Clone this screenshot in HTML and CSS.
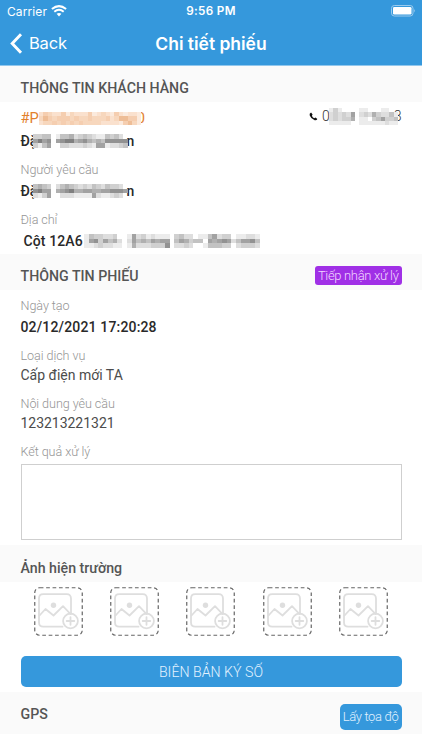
FILE: index.html
```html
<!DOCTYPE html>
<html lang="vi">
<head>
<meta charset="utf-8">
<title>Chi tiết phiếu</title>
<link rel="stylesheet" href="styles.css">
</head>
<body>
<svg class="defs" aria-hidden="true">
  <symbol id="add-photo" viewBox="0 0 49 49">
    <rect x=".75" y=".75" width="47.5" height="47.5" rx="5" fill="none" stroke="#666" stroke-width="1.2" stroke-dasharray="3.7 2.7"/>
    <g fill="none" stroke="#dedede" stroke-width="1.8" stroke-linejoin="round" stroke-linecap="round">
      <path d="M37 26.5V11.5Q37 7.2 32.7 7.2H9.2Q5 7.2 5 11.500V35.500Q5 39.700 9.200 39.700H28.500"/>
      <path d="M5.500 28.500L11.500 22L19.500 28.500L29 19.200L36.500 27"/>
      <circle cx="36.500" cy="34" r="7.400"/>
      <path d="M36.500 30.200V37.800M32.700 34H40.300"/>
    </g>
    <circle cx="19.500" cy="18.200" r="2.700" fill="#dedede"/>
  </symbol>
</svg>

<header class="topbar">
  <div class="status">
    <div class="status-left">
      <span class="carrier">Carrier</span>
      <svg class="wifi" viewBox="0 0 16 12"><path d="M8 11.500L5.600 8.800Q8 7 10.400 8.800Z" fill="#fff"/><path d="M3.300 6.700Q8 2.900 12.700 6.700M.9 4.100Q8-1.800 15.100 4.100" fill="none" stroke="#fff" stroke-width="2"/></svg>
    </div>
    <span class="clock">9:56 PM</span>
    <svg class="battery" viewBox="0 0 25 12"><rect x=".5" y=".5" width="21.500" height="10.500" rx="2.800" fill="none" stroke="#9bcbee"/><rect x="2" y="2" width="18.500" height="7.500" rx="1.300" fill="#fff"/><path d="M23.200 4Q25 5.700 23.200 7.500Z" fill="#9bcbee"/></svg>
  </div>
  <nav class="nav">
    <div class="back"><svg viewBox="0 0 13 21"><path d="M11 1.200L2.200 10.500L11 19.800" fill="none" stroke="#fff" stroke-width="2.900"/></svg><span>Back</span></div>
    <h1>Chi tiết phiếu</h1>
  </nav>
</header>

<main>
  <h2 class="section">THÔNG TIN KHÁCH HÀNG</h2>
  <div class="info">
    <div class="value code-row">
      <div class="code"><span>#P</span><svg class="mosaic m-code" data-tone="orange" data-rows="24322413222412321421221,35434443433433342355441,23343434343333222214531"></svg><span class="tail">0</span></div>
      <div class="phone"><svg class="phone-icon" viewBox="0 0 10 10"><path d="M2.300.6Q0 1.500.8 4Q2.300 8 6.300 9.200Q8.500 9.700 9.300 7.700L7.200 6.100L5.700 7Q3.900 6 3.200 4.200L4 2.900Z" fill="#111"/></svg><span>0</span><svg class="mosaic m-phone" data-rows="1310000110001100,2323260232532241,2323350110346334,1111100111111211"></svg><span class="tail">8</span></div>
    </div>
    <div class="value strong name"><span>Đặ</span><svg class="mosaic m-name" data-rows="334401445234321143420,686706788567545477777,314600332223216612234"></svg><span class="tail">n</span></div>
    <div class="label">Người yêu cầu</div>
    <div class="value strong name"><span>Đặ</span><svg class="mosaic m-name" data-rows="454302454323243243320,786605678556655667776,213600222111162112320"></svg><span class="tail">n</span></div>
    <div class="label">Địa chỉ</div>
    <div class="value strong address"><span>Cột 12A6</span><svg class="mosaic m-address" data-rows="1433223001623121110342201146233011221,1673645202645465660465344065676246674,1123221101522233370223200144433023332"></svg></div>
  </div>

  <div class="section with-action"><h2>THÔNG TIN PHIẾU</h2><span class="badge">Tiếp nhận xử lý</span></div>
  <div class="info ticket">
    <div class="label">Ngày tạo</div>
    <div class="value strong date">02/12/2021 17:20:28</div>
    <div class="label">Loại dịch vụ</div>
    <div class="value plain">Cấp điện mới TA</div>
    <div class="label">Nội dung yêu cầu</div>
    <div class="value plain number">123213221321</div>
    <label class="label" for="result">Kết quả xử lý</label>
    <textarea id="result"></textarea>
  </div>

  <h2 class="section photos-title">Ảnh hiện trường</h2>
  <div class="photos">
    <svg><use href="#add-photo"/></svg>
    <svg><use href="#add-photo"/></svg>
    <svg><use href="#add-photo"/></svg>
    <svg><use href="#add-photo"/></svg>
    <svg><use href="#add-photo"/></svg>
  </div>
  <button class="sign">BIÊN BẢN KÝ SỐ</button>
  <div class="section with-action gps"><h2>GPS</h2><button class="locate">Lấy tọa độ</button></div>
</main>
<script src="mosaic.js"></script>
</body>
</html>
```
FILE: styles.css
```css
* { box-sizing: border-box; }
body { margin: 0; background: #fff; font-family: Roboto, sans-serif; color: #333; }
svg { display: block; flex: none; }
h1, h2 { margin: 0; font-weight: 500; }
.defs { display: none; }

.topbar { height: 66px; background: #3598dc; border-bottom: 1px solid #91c7ed; color: #fff; font-family: Inter, sans-serif; }
.status { height: 21px; padding: 1px 7px 0; display: grid; grid-template-columns: 1fr auto 1fr; align-items: center; }
.status-left { display: flex; align-items: center; gap: 4px; }
.carrier { font-size: 12px; letter-spacing: .1px; }
.wifi { width: 16px; height: 12px; }
.clock { font-weight: 600; font-size: 11.7px; letter-spacing: .35px; }
.battery { width: 25px; height: 12px; justify-self: end; margin-right: -1px; }
.nav { height: 44px; padding: 0 10px; display: grid; grid-template-columns: 1fr auto 1fr; align-items: center; }
.back { display: flex; align-items: center; gap: 6px; font-size: 16.5px; letter-spacing: -.2px; }
.back svg { width: 13px; height: 21px; }
.nav h1 { font-size: 17.5px; font-weight: 600; letter-spacing: -.02px; }

.section { height: 36px; padding: 8px 20.5px 0; background: #fafafa; color: #555; font-size: 14.2px; line-height: 28px; font-weight: 500; }
.with-action { display: flex; justify-content: space-between; align-items: center; }
.section h2 { font-size: inherit; }
.badge { height: 19px; padding: 0 3px; margin-top: -1px; border-radius: 3px; background: #a030e6; color: #f3d9ff; font-size: 13px; letter-spacing: -.33px; line-height: 19px; font-weight: 300; }

.info { height: 152px; padding: 4px 20.5px 0; }
.value { height: 22px; display: flex; align-items: center; font-size: 14px; white-space: nowrap; }
.code-row { height: 24px; justify-content: space-between; }
.code, .phone { display: flex; align-items: center; }
.code { color: #e2812d; font-size: 14.7px; }
.phone { font-weight: 300; margin-top: -4px; }
.phone-icon { width: 9px; height: 9px; margin-right: 4px; }
.strong { font-weight: 500; color: #292929; }
.date { letter-spacing: .16px; }
.plain { height: 18px; font-size: 14px; color: #4c4c4c; font-weight: 400; }
.number { letter-spacing: -.03px; }
.label { display: block; height: 20px; margin-top: 8px; line-height: 20px; font-size: 12.6px; font-weight: 300; letter-spacing: -.07px; color: #959595; }
.mosaic { position: relative; z-index: 1; }
.m-code { width: 102px; height: 13px; }
.m-phone { width: 69px; height: 17px; margin-left: -1px; }
.m-name { width: 95px; height: 14px; margin-left: -4px; }
.m-address { width: 176px; height: 14px; margin-left: 1px; }
.tail { margin-left: -4px; }
.name .tail { margin-left: -2px; }
.address { padding-left: 3px; letter-spacing: .12px; }

.ticket { height: 255px; padding-top: 6px; }
.ticket > .label:first-child { margin-top: 0; }
.ticket .plain + .label { margin-top: 10px; }
textarea { display: block; width: 100%; height: 76px; margin-top: 2px; border: 1px solid #cfcfcf; border-radius: 0; background: #fff; resize: none; }

.photos-title { height: 37px; padding-top: 9px; }
.photos { height: 74px; padding: 5px 20.5px 0; display: grid; grid-template-columns: repeat(5, 1fr); justify-items: center; }
.photos svg { width: 49px; height: 49px; }
button { border: 0; font-family: inherit; font-weight: 300; color: #e1f2ff; background: #3598dc; }
.sign { display: block; width: 381px; height: 31px; margin: 0 auto 5px; border-radius: 5px; font-size: 14.2px; }
.gps { height: 42px; padding-top: 0; }
.gps h2 { margin-top: 2px; }
.locate { height: 26px; padding: 0 3px; margin-top: 7px; border-radius: 5px; font-size: 13px; letter-spacing: -.35px; }
```
FILE: mosaic.js
```js
// Draws masked values as blocks; each digit is the darkness of one cell.
const tones = {
  gray: ['#ffffff', '#ececec', '#dedede', '#d0d0d0', '#c2c2c2', '#b0b0b0', '#a2a2a2', '#929292', '#808080'],
  orange: ['#ffffff', '#fbeadd', '#fae1ce', '#f7d7bd', '#f5ceb0', '#eebd96']
};
document.querySelectorAll('.mosaic').forEach(svg => {
  const rows = svg.dataset.rows.split(',');
  const palette = tones[svg.dataset.tone || 'gray'];
  svg.setAttribute('viewBox', `0 0 ${rows[0].length} ${rows.length}`);
  svg.setAttribute('preserveAspectRatio', 'none');
  svg.setAttribute('shape-rendering', 'crispEdges');
  rows.forEach((row, y) => [...row].forEach((tone, x) => {
    if (tone === '0') return;
    const cell = document.createElementNS('http://www.w3.org/2000/svg', 'rect');
    cell.setAttribute('x', x);
    cell.setAttribute('y', y);
    cell.setAttribute('width', 1);
    cell.setAttribute('height', 1);
    cell.setAttribute('fill', palette[tone]);
    svg.appendChild(cell);
  }));
});
```
